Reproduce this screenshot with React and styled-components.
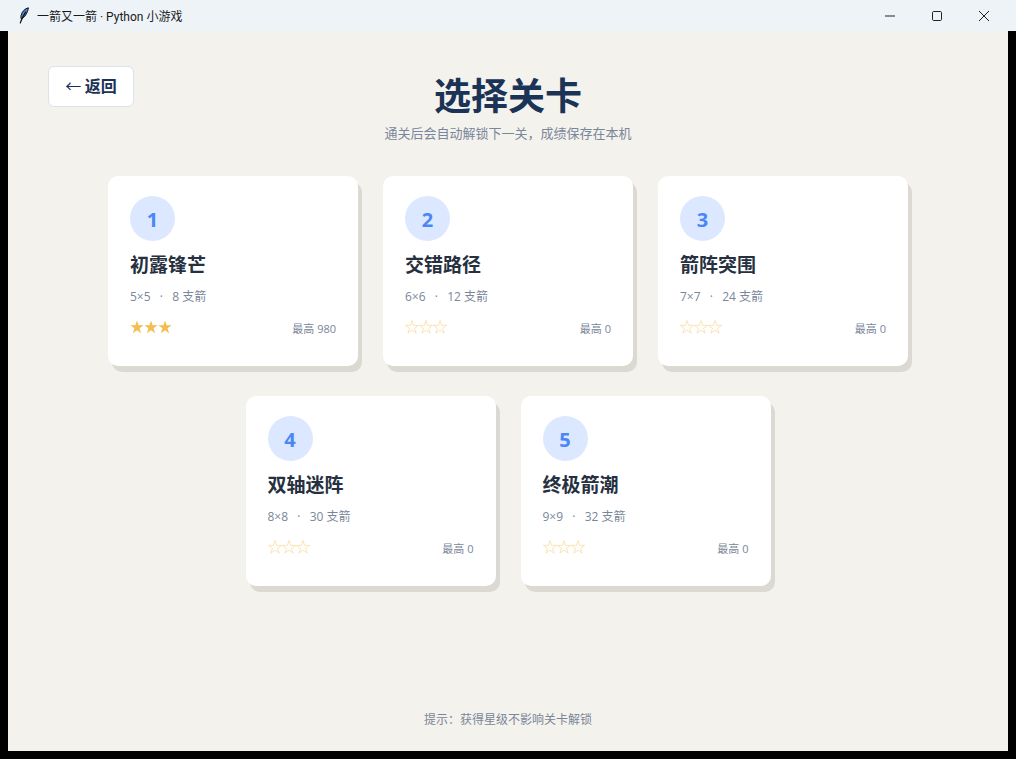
import React from "react";
import styled, {createGlobalStyle} from "styled-components";

const levels = [
  {id: 1, name: "初露锋芒", grid: "5×5", arrows: 8, stars: 3, best: 980},
  {id: 2, name: "交错路径", grid: "6×6", arrows: 12, stars: 0, best: 0},
  {id: 3, name: "箭阵突围", grid: "7×7", arrows: 24, stars: 0, best: 0},
  {id: 4, name: "双轴迷阵", grid: "8×8", arrows: 30, stars: 0, best: 0},
  {id: 5, name: "终极箭潮", grid: "9×9", arrows: 32, stars: 0, best: 0},
];

const GlobalStyle = createGlobalStyle`
  html, body {
    margin: 0;
    padding: 0;
    background: #000;
  }
  * {
    box-sizing: border-box;
  }
  body {
    font-family: "Open Sans", "Noto Sans CJK SC", sans-serif;
  }
`;

const Window = styled.div`
  width: 1016px;
  height: 759px;
  display: flex;
  flex-direction: column;
  padding-bottom: 8px;
  background: #000;
  overflow: hidden;
`;

const TitleBar = styled.div`
  height: 31px;
  flex: none;
  display: flex;
  align-items: center;
  padding: 0 9px 0 19px;
  background: #eef3f8;
`;

const TitleText = styled.span`
  margin-left: 8px;
  font-size: 12px;
  color: #1a1a1a;
  white-space: nowrap;
  font-family: "Roboto", "Noto Sans CJK SC", sans-serif;
`;

const WindowButtons = styled.div`
  margin-left: auto;
  display: flex;
`;

const WindowButton = styled.div`
  width: 47px;
  height: 31px;
  display: flex;
  align-items: center;
  justify-content: center;
  color: #222;
`;

const Page = styled.main`
  flex: 1;
  margin: 0 8px;
  padding: 35px 40px 0;
  display: flex;
  flex-direction: column;
  background: #f4f2ed;
`;

const Header = styled.header`
  display: grid;
  grid-template-columns: 1fr auto 1fr;
  align-items: start;
`;

const BackButton = styled.button`
  justify-self: start;
  width: 86px;
  height: 41px;
  padding: 0 0 3px;
  background: #fff;
  border: 1px solid #dbe2ec;
  border-radius: 6px;
  color: #1a3357;
  font-family: "Noto Sans CJK SC", sans-serif;
  font-size: 16px;
  font-weight: 700;
  white-space: nowrap;
`;

const BackArrow = styled.span`
  font-weight: 400;
`;

const Heading = styled.div`
  display: flex;
  flex-direction: column;
  align-items: center;
`;

const Title = styled.h1`
  margin: 3px 0 0;
  font-family: "Noto Sans CJK SC", sans-serif;
  font-size: 37px;
  line-height: 50px;
  font-weight: 700;
  color: #1a3357;
`;

const Subtitle = styled.p`
  margin: 4px 0 1px;
  font-family: "Noto Sans CJK SC", sans-serif;
  font-size: 13px;
  line-height: 20px;
  color: #7a8699;
`;

const Levels = styled.section`
  margin-top: 32px;
  display: flex;
  flex-direction: column;
  gap: 30px;
`;

const LevelRow = styled.div`
  display: flex;
  justify-content: center;
  gap: 25px;
`;

const Card = styled.article`
  width: 250px;
  height: 190px;
  padding: 20px 22px 0;
  display: flex;
  flex-direction: column;
  background: #fff;
  border-radius: 10px;
  box-shadow: 4px 6px 0 #dcd9d2;
`;

const Badge = styled.div`
  width: 45px;
  height: 45px;
  padding-top: 2px;
  border-radius: 50%;
  display: flex;
  align-items: center;
  justify-content: center;
  background: #dbe8ff;
  color: #4a86f5;
  font-size: 20px;
  font-weight: 700;
`;

const LevelName = styled.h2`
  margin: 9px 0 0;
  font-family: "Noto Sans CJK SC", sans-serif;
  font-size: 19px;
  line-height: 28px;
  font-weight: 700;
  color: #26303f;
`;

const Meta = styled.div`
  margin-top: 10px;
  font-size: 12px;
  line-height: 18px;
  color: #7a8699;
  white-space: pre;
`;

const MetaDot = styled.span`
  margin: 0 3px;
`;

const CardFooter = styled.div`
  margin-top: 10px;
  display: flex;
  justify-content: space-between;
  align-items: flex-end;
`;

const Stars = styled.div`
  display: flex;
  height: 22px;
  align-items: center;
`;

const Best = styled.span`
  font-size: 11px;
  line-height: 18px;
  color: #7a8699;
`;

const Hint = styled.footer`
  margin-top: auto;
  margin-bottom: 23px;
  text-align: center;
  font-family: "Noto Sans CJK SC", sans-serif;
  font-size: 12px;
  line-height: 18px;
  color: #7a8699;
`;

const STAR =
  "M7 .5L8.57 5.34H13.66L9.54 8.33L11.11 13.16L7 10.17L2.89 13.16L4.46 8.33L.34 5.34H5.43Z";

const Star = ({filled}) => (
  <svg width="14" height="14" viewBox="0 0 14 14">
    <path
      d={STAR}
      fill={filled ? "#f5bd50" : "none"}
      stroke={filled ? "none" : "#fbe0ad"}
      strokeWidth="0.9"
    />
  </svg>
);

const Feather = () => (
  <svg width="10" height="17" viewBox="0 0 10 17">
    <path d="M9.4.8C6.2 1.4 3 4.4 2.1 8.4c-.4 1.7-.2 2.9.3 3.6C5.6 10.6 8.7 5.8 9.4.8z" fill="#4a84d8" stroke="#111" strokeWidth="1" />
    <path d="M7 4.6C4.8 8 2.4 12 1.2 16.4" fill="none" stroke="#111" strokeWidth="1.2" />
  </svg>
);

const LevelCard = ({level}) => (
  <Card>
    <Badge>{level.id}</Badge>
    <LevelName>{level.name}</LevelName>
    <Meta>
      {level.grid} <MetaDot> · </MetaDot> {level.arrows} 支箭
    </Meta>
    <CardFooter>
      <Stars>
        {[0, 1, 2].map((i) => (
          <Star key={i} filled={i < level.stars} />
        ))}
      </Stars>
      <Best>最高 {level.best}</Best>
    </CardFooter>
  </Card>
);

export default function App() {
  return (
    <Window>
      <GlobalStyle />
      <TitleBar>
        <Feather />
        <TitleText>一箭又一箭 · Python 小游戏</TitleText>
        <WindowButtons>
          <WindowButton>
            <svg width="10" height="10" viewBox="0 0 10 10">
              <path d="M0 5h10" stroke="currentColor" strokeWidth="1" />
            </svg>
          </WindowButton>
          <WindowButton>
            <svg width="10" height="10" viewBox="0 0 10 10">
              <rect x=".5" y=".5" width="9" height="9" rx="1.2" fill="none" stroke="currentColor" strokeWidth="1" />
            </svg>
          </WindowButton>
          <WindowButton>
            <svg width="10" height="10" viewBox="0 0 10 10">
              <path d="M0 0l10 10M10 0L0 10" stroke="currentColor" strokeWidth="1" />
            </svg>
          </WindowButton>
        </WindowButtons>
      </TitleBar>
      <Page>
        <Header>
          <BackButton>
            <BackArrow>←</BackArrow> 返回
          </BackButton>
          <Heading>
            <Title>选择关卡</Title>
            <Subtitle>通关后会自动解锁下一关，成绩保存在本机</Subtitle>
          </Heading>
        </Header>
        <Levels>
          <LevelRow>
            {levels.slice(0, 3).map((level) => (
              <LevelCard key={level.id} level={level} />
            ))}
          </LevelRow>
          <LevelRow>
            {levels.slice(3).map((level) => (
              <LevelCard key={level.id} level={level} />
            ))}
          </LevelRow>
        </Levels>
        <Hint>提示：获得星级不影响关卡解锁</Hint>
      </Page>
    </Window>
  );
}
